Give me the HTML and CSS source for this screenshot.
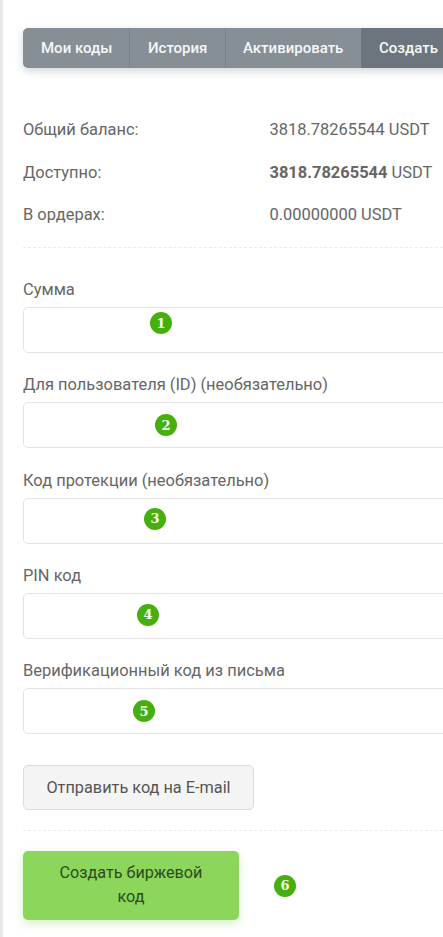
FILE: index.html
```html
<!DOCTYPE html>
<html lang="ru">
<head>
<meta charset="utf-8">
<title>Создать биржевой код</title>
<link rel="stylesheet" href="styles.css">
</head>
<body>
<main class="page">
  <nav class="tabs">
    <a class="tab">Мои коды</a>
    <a class="tab">История</a>
    <a class="tab">Активировать</a>
    <a class="tab active">Создать</a>
  </nav>
  <dl class="balance">
    <div class="row"><dt>Общий баланс:</dt><dd>3818.78265544 USDT</dd></div>
    <div class="row"><dt>Доступно:</dt><dd><b>3818.78265544</b> USDT</dd></div>
    <div class="row"><dt>В ордерах:</dt><dd>0.00000000 USDT</dd></div>
  </dl>
  <hr class="divider first">
  <form class="form">
    <div class="group"><label>Сумма</label><div class="field"><input type="text"><span class="badge b1">1</span></div></div>
    <div class="group"><label>Для пользователя (ID) (необязательно)</label><div class="field"><input type="text"><span class="badge b2">2</span></div></div>
    <div class="group"><label>Код протекции (необязательно)</label><div class="field"><input type="text"><span class="badge b3">3</span></div></div>
    <div class="group"><label>PIN код</label><div class="field"><input type="text"><span class="badge b4">4</span></div></div>
    <div class="group"><label>Верификационный код из письма</label><div class="field"><input type="text"><span class="badge b5">5</span></div></div>
    <button type="button" class="send">Отправить код на E-mail</button>
    <hr class="divider second">
    <div class="submit-row">
      <button type="button" class="submit">Создать биржевой код</button>
      <span class="badge b6">6</span>
    </div>
  </form>
</main>
</body>
</html>
```
FILE: styles.css
```css
* { box-sizing: border-box; }
html, body { margin: 0; height: 100%; overflow: hidden; background: #fff; }
body { border-left: 3px solid #e9e9e9; font-family: Roboto, "Noto Sans", sans-serif; font-size: 16.45px; color: #666; }
.page { width: 470px; padding: 28px 0 0 20px; }

.tabs { display: flex; height: 40px; border-radius: 5px; background: #868e96; box-shadow: 0 3px 8px rgba(90, 105, 120, .28); overflow: hidden; }
.tab { display: flex; align-items: center; flex: none; padding: 0 0 0 18px; color: #f6f7f8; font-weight: 500; font-size: 15px; white-space: nowrap; border-right: 1px solid #78818a; }
.tab:nth-child(1) { width: 107px; }
.tab:nth-child(2) { width: 96px; }
.tab:nth-child(3) { width: 135px; padding-left: 17px; border-right: 0; }
.tab.active { flex: 1; background: #6c757d; border-right: 0; }

.balance { margin: 51px 0 0; }
.row { display: flex; height: 42.5px; line-height: 22px; }
.row dt { width: 246.5px; }
.row dd { margin: 0; }
.row b { font-weight: 700; }

.divider { margin: 0; border: 0; border-top: 1px dashed #ececec; }
.first { margin-top: 0; }
.second { margin: 20px 0 20px; }

.form { margin-top: 30.6px; }
.group { height: 95.25px; }
.group label { display: block; height: 29px; line-height: 24px; }
.field { position: relative; }
.field input { display: block; width: 100%; height: 46px; border: 1px solid #e3e3e3; border-radius: 5px; background: #fff; }

.badge { display: flex; align-items: center; justify-content: center; width: 22px; height: 22px; border-radius: 50%; background: #45b00d; color: #f4fbe9; font: 700 13px "DejaVu Serif", serif; }
.field .badge { position: absolute; }
.b1 { left: 127px; top: 5px; }
.b2 { left: 132px; top: 12px; }
.b3 { left: 121px; top: 10px; }
.b4 { left: 114px; top: 11px; }
.b5 { left: 110px; top: 12px; }

.send { display: block; width: 231px; height: 45px; margin-top: 10.4px; border: 1px solid #dcdcdc; border-radius: 5px; background: #f4f4f5; color: #555; font: 400 16.3px Roboto, sans-serif; }
.submit-row { display: flex; align-items: center; }
.submit { width: 216px; height: 69px; padding: 0 24px; border: 0; border-radius: 5px; background: #8cd65c; color: #2c4a1c; font: 400 16.2px/24px Roboto, sans-serif; box-shadow: 0 4px 10px rgba(140, 214, 92, .35); }
.b6 { margin: 1px 0 0 35px; }
```
